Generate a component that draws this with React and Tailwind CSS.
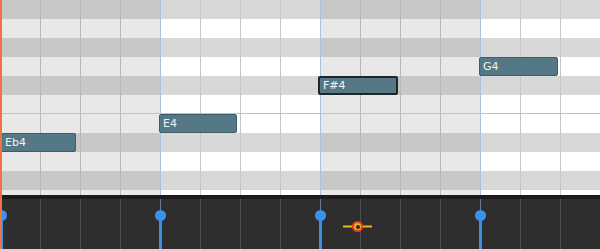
import React from 'react';

const ROWS = [
  { name: 'A#4', black: true },
  { name: 'A4', black: false },
  { name: 'G#4', black: true },
  { name: 'G4', black: false },
  { name: 'F#4', black: true },
  { name: 'F4', black: false, split: true },
  { name: 'E4', black: false },
  { name: 'Eb4', black: true },
  { name: 'D4', black: false },
  { name: 'C#4', black: true },
  { name: 'C4', black: false },
];

const NOTES = [
  { label: 'Eb4', row: 7, x: 1, w: 75 },
  { label: 'E4', row: 6, x: 159, w: 78 },
  { label: 'F#4', row: 4, x: 318, w: 80, selected: true },
  { label: 'G4', row: 3, x: 479, w: 79 },
];

const VELOCITIES = [1, 160, 320, 480];
const CELLS = Array.from({ length: 15 }, (_, i) => i);

function cellBg(j, black) {
  const odd = Math.floor(j / 4) % 2 === 1;
  if (black) return odd ? 'bg-[#d8d8d8]' : 'bg-[#c8c8c8]';
  return odd ? 'bg-white' : 'bg-[#e8e8e8]';
}

function cellLine(j) {
  if (j === 0) return 'border-l border-transparent';
  if (j % 4 === 0) return 'border-l border-[#a8c2e2]';
  return Math.floor(j / 4) % 2 === 1 ? 'border-l border-[#c6c6c6]' : 'border-l border-[#b8b8b8]';
}

export default function App() {
  return (
    <div className="relative w-[600px] h-[249px] overflow-hidden bg-[#2e2e2e] font-['DejaVu_Sans',sans-serif]">
      {/* note grid */}
      <div className="relative h-[195px] overflow-hidden">
        <div className="flex flex-col">
          {ROWS.map((r) => (
            <div key={r.name} className={`flex h-[19px] shrink-0 ${r.split ? 'border-b border-[#c0c0c0]' : ''}`}>
              {CELLS.map((j) => (
                <div key={j} className={`w-[40px] shrink-0 ${cellBg(j, r.black)} ${cellLine(j)}`} />
              ))}
            </div>
          ))}
        </div>
        {NOTES.map((n) => (
          <div
            key={n.label}
            className={`absolute flex items-center h-[19px] rounded-[2px] bg-[#557886] text-[11px] text-[#eef3f5] pl-[3px] leading-none ${
              n.selected ? 'border-2 border-[#1f2628]' : 'border border-[#3e5d6a]'
            }`}
            style={{ left: n.x, top: n.row * 19, width: n.w }}
          >
            {n.label}
          </div>
        ))}
      </div>

      {/* velocity lane */}
      <div className="relative h-[54px] border-t-[4px] border-[#1c1c1c]">
        <div className="flex h-full">
          {CELLS.map((j) => (
            <div
              key={j}
              className={`w-[40px] shrink-0 ${j === 0 ? 'border-l border-transparent' : j % 4 === 0 ? 'border-l border-[#6e7a88]' : 'border-l border-[#505050]'}`}
            />
          ))}
        </div>
        {VELOCITIES.map((x) => (
          <div key={x} className="absolute top-[11px] bottom-0 flex flex-col items-center w-[11px]" style={{ left: x - 5 }}>
            <div className="w-[11px] h-[11px] rounded-full bg-[#3a92ec] shrink-0" />
            <div className="w-[3px] flex-1 bg-[#3a8ee4] -mt-[2px]" />
          </div>
        ))}
        <div className="absolute left-[343px] top-[26px] w-[29px] h-[3px] bg-[#f4b81c] border-y border-[#e8421c]" />
        <div className="absolute left-[352px] top-[22px] w-[11px] h-[11px] rounded-full bg-[#f2b21a] border-2 border-[#e8421c] flex items-center justify-center">
          <div className="w-[4px] h-[4px] rounded-full bg-[#2a2a2a]" />
        </div>
      </div>

      {/* cursor line */}
      <div className="absolute left-0 top-0 bottom-0 w-[2px] bg-[#ee7446]" />
    </div>
  );
}
